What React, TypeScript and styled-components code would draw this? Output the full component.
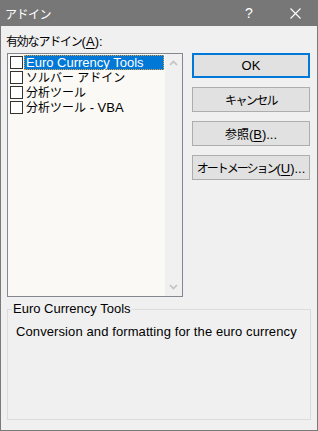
import React, { useState } from "react";
import styled, { createGlobalStyle } from "styled-components";

const GlobalStyle = createGlobalStyle`
  html, body {
    margin: 0;
    padding: 0;
    background: #f0f0f0;
  }
  body {
    font-family: "Liberation Sans", "Noto Sans CJK JP", sans-serif;
    font-size: 12px;
    color: #000;
  }
`;

const Window = styled.div`
  width: 318px;
  height: 431px;
  box-sizing: border-box;
  border: 1px solid #7a7a7a;
  border-top: none;
  background: #f0f0f0;
  display: flex;
  flex-direction: column;
`;

const TitleBar = styled.div`
  height: 26px;
  margin: 0 -1px;
  background: #777777;
  color: #ffffff;
  display: flex;
  align-items: center;
`;

const Title = styled.div`
  flex: 1;
  padding-left: 5px;
  font-size: 12px;
  letter-spacing: -0.5px;
`;

const TitleButton = styled.div`
  width: 46px;
  height: 26px;
  display: flex;
  align-items: center;
  justify-content: center;
  font-size: 14px;
`;

const Body = styled.div`
  flex: 1;
  display: flex;
  flex-direction: column;
  padding: 8px 6px 10px 6px;
`;

const Label = styled.div`
  line-height: 16px;
  height: 16px;
  margin-bottom: 3px;
  margin-left: -1px;
  font-size: 13px;
`;

const Underline = styled.span`
  text-decoration: underline;
  text-underline-offset: 2px;
`;

const Jp = styled.span<{ $tight?: number }>`
  font-size: 12px;
  letter-spacing: ${(p) => p.$tight ?? 0}px;
`;

const MainRow = styled.div`
  display: flex;
  gap: 9px;
`;

const ListBox = styled.div`
  width: 176px;
  height: 244px;
  box-sizing: border-box;
  border: 1px solid #828790;
  background: #faf9f5;
  display: flex;
`;

const Items = styled.div`
  flex: 1;
  padding: 1px 1px 0 2px;
`;

const Item = styled.div`
  height: 15px;
  display: flex;
  align-items: center;
`;

const Check = styled.span`
  width: 13px;
  height: 13px;
  box-sizing: border-box;
  border: 1px solid #333333;
  background: #ffffff;
  flex: none;
`;

const ItemText = styled.span<{ $selected?: boolean }>`
  flex: 1;
  height: 15px;
  line-height: 15px;
  margin-left: 1px;
  padding-left: 2px;
  white-space: nowrap;
  font-size: 13px;
  background: ${(p) => (p.$selected ? "#0078d7" : "transparent")};
  color: ${(p) => (p.$selected ? "#ffffff" : "#000000")};
  outline: ${(p) => (p.$selected ? "1px dotted #e0a040" : "none")};
  outline-offset: -1px;
`;

const ScrollBar = styled.div`
  width: 17px;
  background: #f0f0f0;
  display: flex;
  flex-direction: column;
  justify-content: space-between;
  align-items: center;
  padding: 6px 0;
`;

const Buttons = styled.div`
  display: flex;
  flex-direction: column;
  gap: 9px;
`;

const Button = styled.button<{ $default?: boolean }>`
  width: 118px;
  height: 25px;
  box-sizing: border-box;
  background: #e1e1e1;
  border: ${(p) => (p.$default ? "2px solid #0078d7" : "1px solid #adadad")};
  font-family: "Liberation Sans", "Noto Sans CJK JP", sans-serif;
  font-size: 13px;
  color: #000;
  padding: 0;
`;

const GroupBox = styled.fieldset`
  flex: 1;
  margin: 4px 0 0 0;
  padding: 7px 8px 0 8px;
  border: 1px solid #dcdcdc;
  min-width: 0;
`;

const GroupLegend = styled.legend`
  margin-left: -4px;
  padding: 0 1px;
  line-height: 16px;
  font-size: 13px;
`;

const Description = styled.div`
  line-height: 16px;
  font-size: 13px;
  letter-spacing: 0.1px;
`;

const Chevron = ({ up }: { up?: boolean }) => (
  <svg width="9" height="6" viewBox="0 0 9 6">
    <path
      d={up ? "M1 5 L4.5 1.5 L8 5" : "M1 1 L4.5 4.5 L8 1"}
      fill="none"
      stroke="#c2c2c2"
      strokeWidth="1.6"
    />
  </svg>
);

const addins: { name: React.ReactNode; key: string }[] = [
  { key: "euro", name: "Euro Currency Tools" },
  { key: "solver", name: <Jp>ソルバー アドイン</Jp> },
  { key: "atp", name: <Jp>分析ツール</Jp> },
  {
    key: "atpvba",
    name: (
      <>
        <Jp>分析ツール</Jp> - VBA
      </>
    ),
  },
];

export default function App() {
  const [selected, setSelected] = useState(0);

  return (
    <>
      <GlobalStyle />
      <Window>
        <TitleBar>
          <Title>アドイン</Title>
          <TitleButton>?</TitleButton>
          <TitleButton>
            <svg width="11" height="11" viewBox="0 0 11 11">
              <path d="M0.5 0.5 L10.5 10.5 M10.5 0.5 L0.5 10.5" stroke="#ffffff" strokeWidth="1.1" />
            </svg>
          </TitleButton>
        </TitleBar>
        <Body>
          <Label>
            <Jp $tight={-1.2}>有効なアドイン</Jp>(<Underline>A</Underline>):
          </Label>
          <MainRow>
            <ListBox>
              <Items>
                {addins.map((a, i) => (
                  <Item key={a.key} onClick={() => setSelected(i)}>
                    <Check />
                    <ItemText $selected={i === selected}>{a.name}</ItemText>
                  </Item>
                ))}
              </Items>
              <ScrollBar>
                <Chevron up />
                <Chevron />
              </ScrollBar>
            </ListBox>
            <Buttons>
              <Button $default>OK</Button>
              <Button>
                <Jp $tight={-1.6}>キャンセル</Jp>
              </Button>
              <Button>
                <Jp>参照</Jp>(<Underline>B</Underline>)...
              </Button>
              <Button>
                <Jp $tight={-2}>オートメーション</Jp>(<Underline>U</Underline>)...
              </Button>
            </Buttons>
          </MainRow>
          <GroupBox>
            <GroupLegend>Euro Currency Tools</GroupLegend>
            <Description>Conversion and formatting for the euro currency</Description>
          </GroupBox>
        </Body>
      </Window>
    </>
  );
}
